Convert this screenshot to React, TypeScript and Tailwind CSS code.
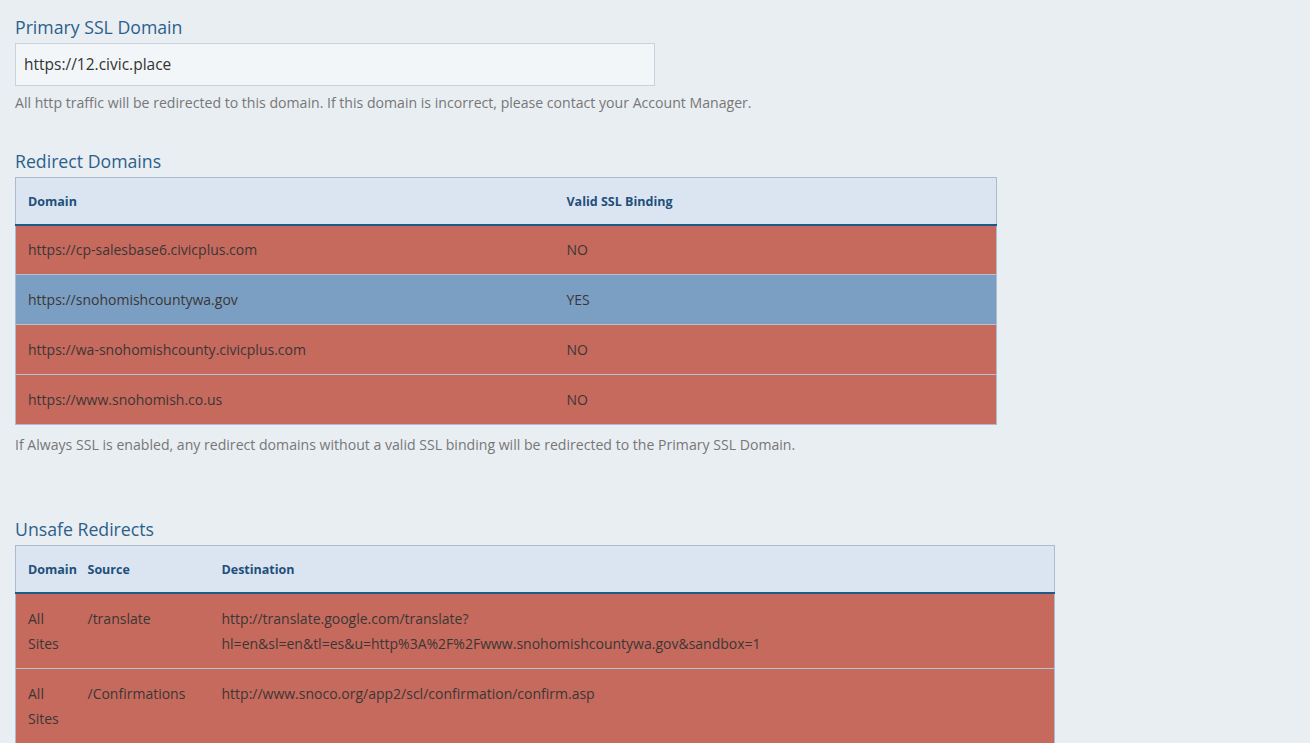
import React from "react";

const font = { fontFamily: '"Open Sans", "Noto Sans", sans-serif' };

function Heading({ children }: { children: React.ReactNode }) {
  return <h2 className="text-[17.7px] leading-[24px] text-[#2c5f8c] mb-[4px]">{children}</h2>;
}

export default function App() {
  const redirects = [
    { d: "https://cp-salesbase6.civicplus.com", v: "NO", ok: false },
    { d: "https://snohomishcountywa.gov", v: "YES", ok: true },
    { d: "https://wa-snohomishcounty.civicplus.com", v: "NO", ok: false },
    { d: "https://www.snohomish.co.us", v: "NO", ok: false },
  ];
  return (
    <div className="min-h-[743px] bg-[#e9eef2] px-[15px] pt-[15px] text-[#3a3a3a]" style={font}>
      <Heading>Primary SSL Domain</Heading>
      <div className="w-[640px] h-[43px] bg-[#f3f6f9] border border-[#cad3dc] flex items-center px-[8px] pt-[1px] text-[15.5px] text-[#333]">
        https://12.civic.place
      </div>
      <p className="text-[14.1px] text-[#777] mt-[6px] leading-[22px]">
        All http traffic will be redirected to this domain. If this domain is incorrect, please contact your Account Manager.
      </p>

      <div className="mt-[35px]">
        <Heading>Redirect Domains</Heading>
        <table className="w-[982px] border border-[#adbccd] border-collapse text-[14px]">
          <thead>
            <tr className="bg-[#dae5f1] border-b-2 border-[#1d5a8b]">
              <th className="h-[47px] pt-[3px] text-left font-bold text-[12.5px] text-[#1f4f7a] pl-[12px] w-[539px]">Domain</th>
              <th className="pt-[3px] pl-[12px] text-left font-bold text-[12.5px] text-[#1f4f7a]">Valid SSL Binding</th>
            </tr>
          </thead>
          <tbody>
            {redirects.map((r, i) => (
              <tr
                key={i}
                className={`${r.ok ? "bg-[#7a9fc3]" : "bg-[#c66a5d]"} ${i > 0 ? "border-t border-[#b4c2d1]" : ""}`}
              >
                <td className="h-[50px] pl-[12px] text-[#3b3636]">{r.d}</td>
                <td className="pl-[12px] text-[#3b3636]">{r.v}</td>
              </tr>
            ))}
          </tbody>
        </table>
        <p className="text-[14.1px] text-[#777] mt-[9px] leading-[22px]">
          If Always SSL is enabled, any redirect domains without a valid SSL binding will be redirected to the Primary SSL Domain.
        </p>
      </div>

      <div className="mt-[61px]">
        <Heading>Unsafe Redirects</Heading>
        <table className="w-[1040px] border border-[#adbccd] border-collapse text-[14px]">
          <thead>
            <tr className="bg-[#dae5f1] border-b-2 border-[#1d5a8b]">
              <th className="h-[47px] pt-[3px] text-left font-bold text-[12.5px] text-[#1f4f7a] pl-[12px] w-[72px]">Domain</th>
              <th className="pt-[3px] text-left font-bold text-[12.5px] text-[#1f4f7a] w-[134px]">Source</th>
              <th className="pt-[3px] text-left font-bold text-[12.5px] text-[#1f4f7a]">Destination</th>
            </tr>
          </thead>
          <tbody>
            <tr className="bg-[#c66a5d]">
              <td className="pl-[12px] py-[12px] align-top leading-[25px] text-[#3b3636]">All<br />Sites</td>
              <td className="py-[12px] align-top leading-[25px] text-[#3b3636]">/translate</td>
              <td className="py-[12px] align-top leading-[25px] text-[#3b3636]">
                http://translate.google.com/translate?<br />hl=en&amp;sl=en&amp;tl=es&amp;u=http%3A%2F%2Fwww.snohomishcountywa.gov&amp;sandbox=1
              </td>
            </tr>
            <tr className="bg-[#c66a5d] border-t border-[#b4c2d1]">
              <td className="pl-[12px] py-[12px] align-top leading-[25px] text-[#3b3636]">All<br />Sites</td>
              <td className="py-[12px] align-top leading-[25px] text-[#3b3636]">/Confirmations</td>
              <td className="py-[12px] align-top leading-[25px] text-[#3b3636]">http://www.snoco.org/app2/scl/confirmation/confirm.asp</td>
            </tr>
          </tbody>
        </table>
      </div>
    </div>
  );
}
